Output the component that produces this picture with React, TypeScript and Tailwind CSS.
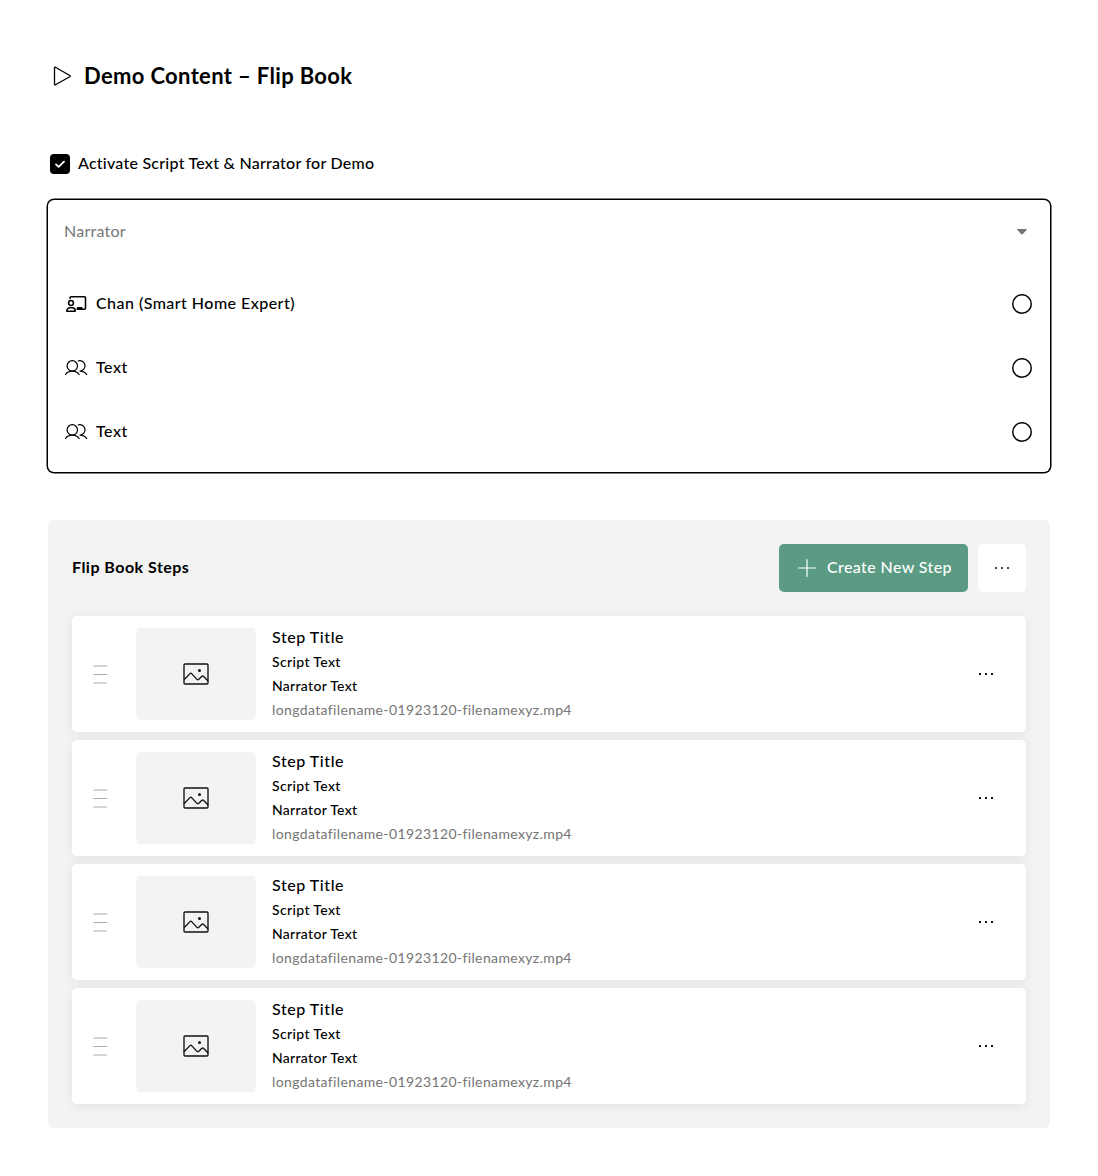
import type { ReactNode } from "react";

const steps = [1, 2, 3, 4];

function Dots({ className }: { className: string }) {
  return (
    <svg width="24" height="24" viewBox="0 0 24 24" fill="currentColor" className={className}>
      <rect x="5" y="11" width="2" height="2" rx="0.3" />
      <rect x="11" y="11" width="2" height="2" rx="0.3" />
      <rect x="17" y="11" width="2" height="2" rx="0.3" />
    </svg>
  );
}

function PresenterIcon() {
  return (
    <svg width="24" height="24" viewBox="0 0 24 24" fill="none" stroke="currentColor" strokeWidth="1.5">
      <path d="M6 7V5.800a1 1 0 0 1 1-1H20.500a1 1 0 0 1 1 1V16.300a1 1 0 0 1-1 1H12.500" />
      <circle cx="7" cy="11" r="2.400" />
      <path d="M2.800 19.300v-.5a3 3 0 0 1 3-3H8.200a3 3 0 0 1 3 3v.5z" strokeLinejoin="round" />
      <path d="M12.800 17v-.7a1.200 1.200 0 0 1 1.200-1.200h3.400a1.200 1.200 0 0 1 1.200 1.200V17z" fill="currentColor" stroke="none" />
    </svg>
  );
}

function UsersIcon() {
  return (
    <svg width="24" height="24" viewBox="0 0 24 24" fill="none" stroke="currentColor" strokeWidth="1.25" strokeLinecap="round" strokeLinejoin="round">
      <circle cx="8.300" cy="9.900" r="5.200" />
      <path d="M1.500 18.500C2.900 16.300 5.300 15.100 8.300 15.100S13.700 16.300 15.100 18.500" />
      <path d="M14.400 4.900a5.200 5.200 0 1 1 1.600 10.200c2.800 0 5.200 1.200 6.600 3.400" />
    </svg>
  );
}

function ImageIcon() {
  return (
    <svg width="32" height="32" viewBox="0 0 32 32" fill="none" stroke="#111" strokeWidth="1.35" strokeLinejoin="round">
      <rect x="4" y="6" width="24" height="20" rx="1" />
      <path d="M4 21.700l6-6.100q.8-.8 1.600 0l5.600 6q.7.6 1.400 0l3.300-3.300q.8-.7 1.600 0l4.500 4.700" />
      <circle cx="19.500" cy="12.500" r="1.500" fill="#111" stroke="none" />
    </svg>
  );
}

function Option({ label, tracking, icon }: { label: string; tracking: string; icon: ReactNode }) {
  return (
    <div className="flex h-16 items-center gap-2 px-4">
      {icon}
      <span className={`mb-0.5 flex-1 font-medium ${tracking}`}>{label}</span>
      <span className="mr-0.5 size-5 rounded-full shadow-[inset_0_0_0_1.5px_#000]" />
    </div>
  );
}

function StepCard() {
  return (
    <div className="flex h-[116px] items-center rounded-[5px] bg-white px-4 shadow-[0_2px_12px_rgba(0,0,0,0.07)]">
      <svg width="24" height="24" viewBox="0 0 24 24" stroke="#aaa" strokeWidth="1.2" strokeLinecap="round" className="shrink-0">
        <path d="M5.900 4h12.700M5.900 12.500h12.700M5.900 21h12.700" />
      </svg>
      <div className="ml-6 flex h-[92px] w-[120px] items-center justify-center rounded-[5px] bg-[#f3f3f3]">
        <ImageIcon />
      </div>
      <div className="mb-0.5 ml-4 flex-1 text-sm leading-6">
        <p className="text-base leading-6 font-medium tracking-[0.55px]">Step Title</p>
        <p className="mt-px font-medium tracking-[0.36px]">Script Text</p>
        <p className="font-medium tracking-[0.3px]">Narrator Text</p>
        <p className="tracking-[0.37px] text-[#757575]">longdatafilename-01923120-filenamexyz.mp4</p>
      </div>
      <button className="mr-3">
        <Dots className="text-[#111]" />
      </button>
    </div>
  );
}

export default function App() {
  return (
    <div className="h-[1176px] w-[1098px] bg-white px-12 pt-[60px] font-[Lato,'Noto_Sans',sans-serif] text-base text-black">
      <header className="flex h-8 items-center gap-3">
        <svg width="24" height="24" viewBox="0 0 24 24" fill="none" stroke="#000" strokeWidth="1.3" strokeLinejoin="round">
          <path d="M6.500 3.800v16.400q0 1 .9.500L21.800 12.700q.9-.6 0-1.200L7.400 3.300q-.9-.5-.9.500z" />
        </svg>
        <h1 className="text-[22px] leading-8 font-bold tracking-[0.34px]">Demo Content – Flip Book</h1>
      </header>

      <label className="mt-[60px] flex h-6 items-center gap-2 pl-0.5">
        <span className="flex size-5 items-center justify-center rounded bg-black">
          <svg width="20" height="20" viewBox="0 0 20 20" fill="none" stroke="#fff" strokeWidth="1.8" strokeLinecap="round" strokeLinejoin="round">
            <path d="M6 10.400L8.600 12.900L14 7.700" />
          </svg>
        </span>
        <span className="mb-0.5 font-medium tracking-[0.24px]">Activate Script Text &amp; Narrator for Demo</span>
      </label>

      <section className="mt-6 h-[272px] w-[1002px] rounded-[6px] shadow-[0_0_0_1.5px_#000]">
        <div className="flex h-16 items-center justify-between px-4 text-[#757575]">
          <span className="mb-0.5 tracking-[0.25px]">Narrator</span>
          <svg width="24" height="24" viewBox="0 0 24 24" fill="currentColor">
            <path d="M7.700 9h8.600q1.100 0 .3.900l-3.700 4.200q-.9.900-1.800 0L7.400 9.900q-.8-.9.300-.9z" />
          </svg>
        </div>
        <div className="pt-2">
          <Option label="Chan (Smart Home Expert)" tracking="tracking-[0.46px]" icon={<PresenterIcon />} />
          <Option label="Text" tracking="tracking-[0.5px]" icon={<UsersIcon />} />
          <Option label="Text" tracking="tracking-[0.5px]" icon={<UsersIcon />} />
        </div>
      </section>

      <section className="mt-12 h-[608px] w-[1002px] rounded-[6px] bg-[#f3f3f3] p-6">
        <div className="flex h-12 items-center">
          <h2 className="mb-0.5 flex-1 font-bold tracking-[0.48px]">Flip Book Steps</h2>
          <button className="flex h-12 w-[189px] items-center gap-2 rounded-[5px] bg-[#5b9b84] pl-4 text-white">
            <svg width="24" height="24" viewBox="0 0 24 24" stroke="#fff" strokeWidth="1.2" strokeLinecap="round">
              <path d="M12 3.500v17M3.500 12h17" />
            </svg>
            <span className="mb-0.5 font-medium whitespace-nowrap tracking-[0.39px]">Create New Step</span>
          </button>
          <button className="ml-2.5 flex size-12 items-center justify-center rounded-[5px] bg-white">
            <Dots className="text-[#444]" />
          </button>
        </div>
        <div className="mt-6 flex flex-col gap-2">
          {steps.map((step) => (
            <StepCard key={step} />
          ))}
        </div>
      </section>
    </div>
  );
}
